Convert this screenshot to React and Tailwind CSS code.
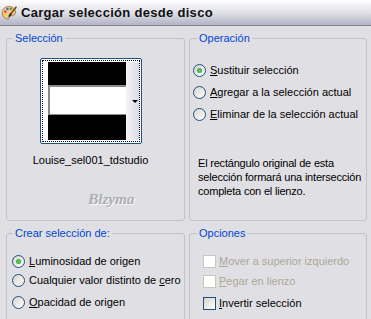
import React from "react";

const font = { fontFamily: '"Liberation Sans", Arial, sans-serif' };

function Radio({ checked }) {
  return (
    <span className="relative flex h-[13px] w-[13px] shrink-0 items-center justify-center rounded-full border border-[#1c5180] bg-linear-to-br from-[#d6d5cc] to-white">
      {checked && (
        <span className="h-[5px] w-[5px] rounded-full bg-radial from-[#63d363] to-[#1f9a1f]" />
      )}
    </span>
  );
}

function Check({ disabled }) {
  return (
    <span
      className={
        disabled
          ? "h-[13px] w-[13px] shrink-0 border border-[#cac8bb] bg-white"
          : "h-[13px] w-[13px] shrink-0 border border-[#1c5180] bg-linear-to-br from-[#d6d5cc] to-white"
      }
    />
  );
}

function Group({ title, className, children, legendClass = "ml-[6px]" }) {
  return (
    <fieldset className={"rounded-[3px] border border-[#c3c2c6] " + className}>
      <legend className={"px-[2px] text-[11px] leading-[13px] text-[#0046d5] " + legendClass}>
        {title}
      </legend>
      {children}
    </fieldset>
  );
}

function Palette() {
  return (
    <svg width="16" height="16" viewBox="0 0 16 16">
      <path
        d="M8 1.5C4 1.5 1.2 4.2 1.2 7.6c0 3.3 2.6 6.4 5.6 6.4 1.3 0 1.6-.8 1.2-1.7-.4-.9.1-1.7 1.2-1.6 2.7.2 5.4-.6 5.4-3.4C14.6 4 11.7 1.5 8 1.5z"
        fill="#f0c98a"
        stroke="#9a6a2c"
        strokeWidth="0.8"
      />
      <circle cx="4.3" cy="6.6" r="1.2" fill="#e03020" />
      <circle cx="6.5" cy="4" r="1.2" fill="#2d5fd8" />
      <circle cx="9.8" cy="3.9" r="1.1" fill="#2aa02a" />
      <circle cx="4.6" cy="10.2" r="1.1" fill="#f2d21c" />
      <path d="M15 2.2 9.3 9.6" stroke="#7b4a1a" strokeWidth="1.6" strokeLinecap="round" />
      <path d="M9.6 9.2 8.4 11" stroke="#2a2a2a" strokeWidth="1.8" strokeLinecap="round" />
    </svg>
  );
}

export default function App() {
  return (
    <div className="h-[319px] w-[371px] overflow-hidden bg-[#e0dfe3] text-[11px] text-black" style={font}>
      <div className="flex h-[26px] items-center gap-[4px] border-b border-[#82819a] bg-linear-to-b from-[#fefefe] via-[#e0e0e8] to-[#b3b3c4] pl-[1px]">
        <Palette />
        <span className="text-[13px] font-bold tracking-[0.3px] text-[#111]">Cargar selección desde disco</span>
      </div>

      <div className="grid grid-cols-[179px_178px] grid-rows-[189px_100px] gap-x-[4px] gap-y-[6px] px-[6px] pt-[6px]">
        <Group title="Selección" className="flex flex-col items-center pr-[10px]">
          <div className="mt-[13px] h-[86px] w-[102px] rounded-[2px] border border-[#1c5180] bg-white p-[1px]">
            <div className="flex h-full border border-dotted border-black py-[1px] pl-[5px]">
              <div className="flex w-[78px] flex-col">
                <div className="h-[23px] bg-black" />
                <div className="h-[30px] border-t-2 border-b border-l-2 border-[#8a8a8a] bg-white" />
                <div className="flex-1 bg-black" />
              </div>
              <div className="flex flex-1 items-center justify-end bg-linear-to-r from-[#f4f4f8] to-[#dcdce6] pr-[1px]">
                <span className="h-0 w-0 border-x-[3px] border-t-[3px] border-x-transparent border-t-black" />
              </div>
            </div>
          </div>
          <div className="mt-[10px] leading-[13px]">Louise_sel001_tdstudio</div>
          <div
            className="mt-[24px] ml-[42px] text-[15px] font-bold italic leading-[16px] text-[#b0b0b0]"
            style={{ fontFamily: '"Liberation Serif", serif', textShadow: "1px 1px 1px #fff, -1px 0 1px #c8c8c8" }}
          >
            Blzyma
          </div>
        </Group>

        <Group title="Operación" className="flex flex-col" legendClass="ml-[7px]">
          <div className="mt-[14px] flex flex-col pl-[3px]">
            <div className="flex h-[22px] items-center gap-[4px]">
              <Radio checked />
              <span><u>S</u>ustituir selección</span>
            </div>
            <div className="flex h-[22px] items-center gap-[4px]">
              <Radio />
              <span><u>A</u>gregar a la selección actual</span>
            </div>
            <div className="flex h-[22px] items-center gap-[4px]">
              <Radio />
              <span><u>E</u>liminar de la selección actual</span>
            </div>
          </div>
          <p className="mt-[31px] whitespace-nowrap pl-[8px] leading-[14px] tracking-[-0.2px]">
            El rectángulo original de esta
            <br />
            selección formará una intersección
            <br />
            completa con el lienzo.
          </p>
        </Group>

        <Group title="Crear selección de:" className="flex flex-col">
          <div className="mt-[12px] flex flex-col pl-[5px]">
            <div className="flex h-[19px] items-center gap-[4px]">
              <Radio checked />
              <span><u>L</u>uminosidad de origen</span>
            </div>
            <div className="flex h-[19px] items-center gap-[4px]">
              <Radio />
              <span>Cualquier valor distinto de <u>c</u>ero</span>
            </div>
            <div className="flex h-[24px] items-center gap-[4px]">
              <Radio />
              <span><u>O</u>pacidad de origen</span>
            </div>
          </div>
        </Group>

        <Group title="Opciones" className="flex flex-col" legendClass="ml-[7px]">
          <div className="mt-[12px] flex flex-col pl-[13px]">
            <div className="flex h-[19px] items-center gap-[3px] text-[#aca899]">
              <Check disabled />
              <span><u>M</u>over a superior izquierdo</span>
            </div>
            <div className="flex h-[21px] items-center gap-[3px] text-[#aca899]">
              <Check disabled />
              <span><u>P</u>egar en lienzo</span>
            </div>
            <div className="flex h-[22px] items-center gap-[3px]">
              <Check />
              <span><u>I</u>nvertir selección</span>
            </div>
          </div>
        </Group>
      </div>
    </div>
  );
}
